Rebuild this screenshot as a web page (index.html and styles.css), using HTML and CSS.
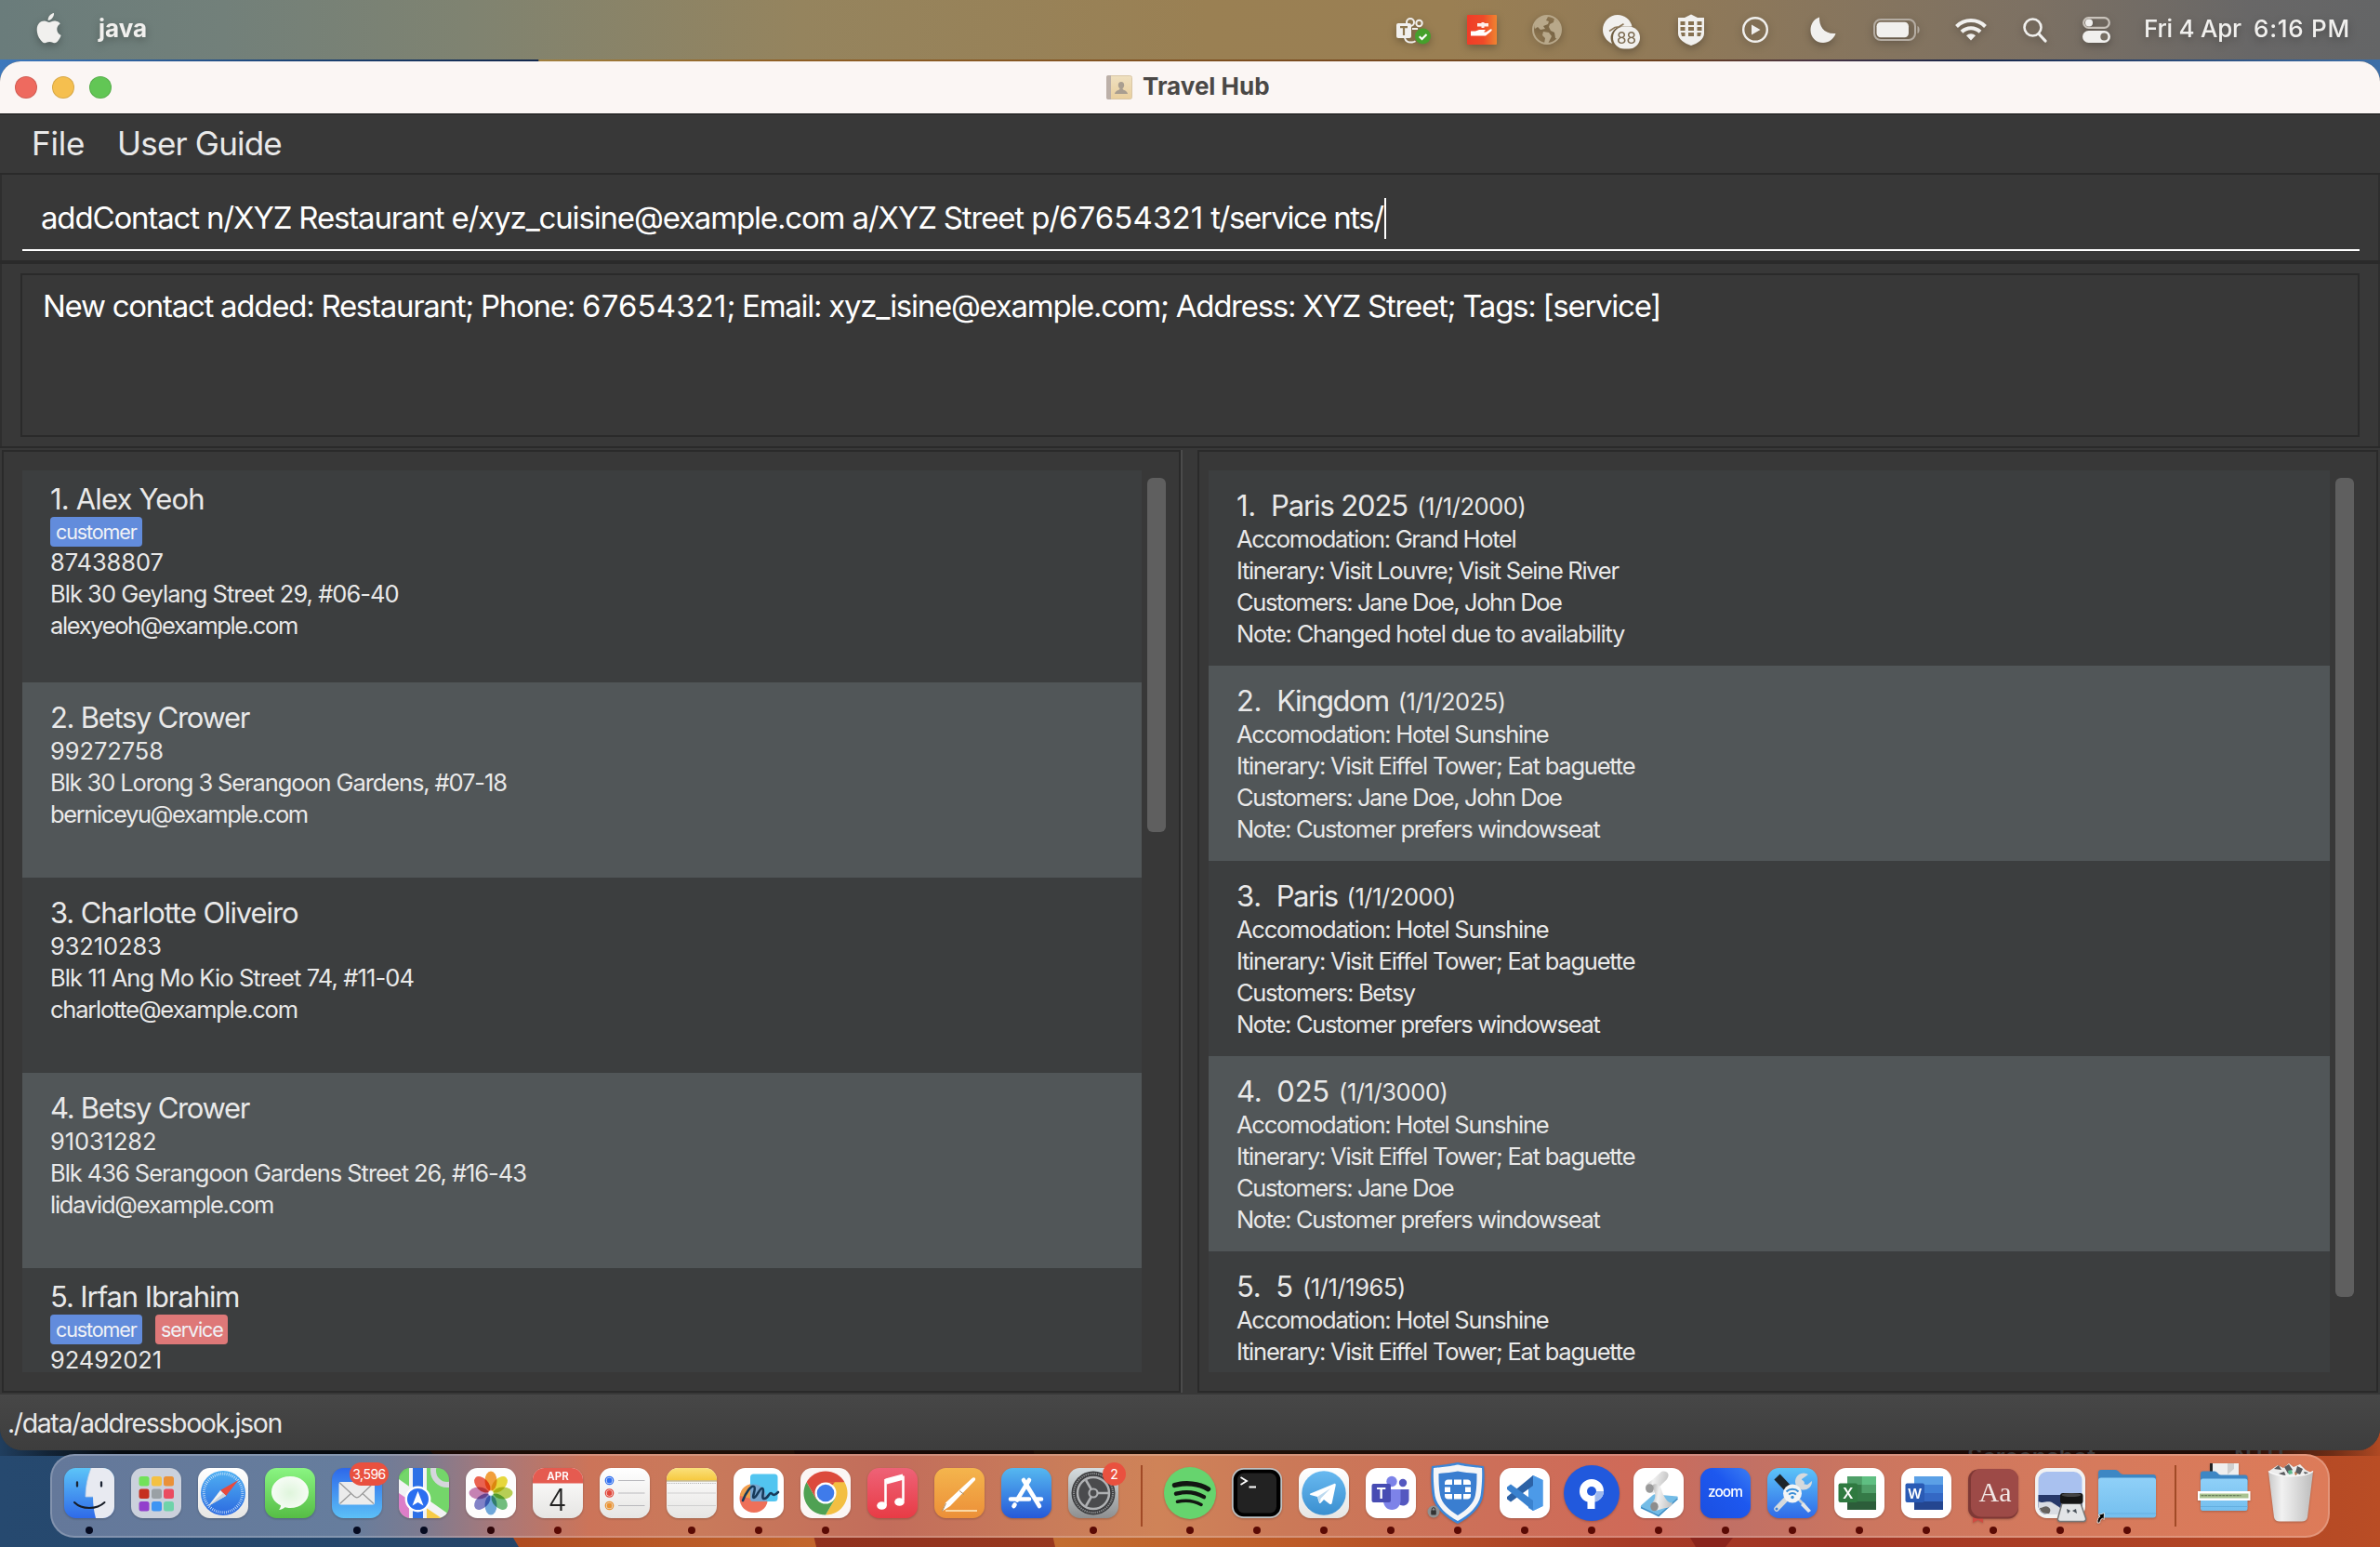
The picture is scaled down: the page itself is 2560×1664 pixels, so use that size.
FILE: index.html
```
<!DOCTYPE html>
<html lang="en">
<head>
<meta charset="utf-8">
<title>Travel Hub</title>
<link rel="stylesheet" href="styles.css">
</head>
<body>
<svg class="wallpaper" width="2560" height="1664" viewBox="0 0 2560 1664" aria-hidden="true">
  <defs>
    <linearGradient id="wTop"><stop offset="0" stop-color="#3d78bd"/><stop offset=".12" stop-color="#1d4577"/><stop offset=".226" stop-color="#13284c"/><stop offset=".2265" stop-color="#a1803e"/><stop offset=".33" stop-color="#8f5f24"/><stop offset=".7" stop-color="#6b3f1d"/><stop offset=".76" stop-color="#4b3542"/><stop offset=".83" stop-color="#17264a"/><stop offset="1" stop-color="#3d6fa8"/></linearGradient>
    <linearGradient id="wBlue"><stop offset="0" stop-color="#26496f"/><stop offset="1" stop-color="#244468"/></linearGradient>
    <linearGradient id="wOr1"><stop offset="0" stop-color="#a8431d"/><stop offset="1" stop-color="#c4682e"/></linearGradient>
    <linearGradient id="wOr2"><stop offset="0" stop-color="#8f2f1d"/><stop offset="1" stop-color="#98381f"/></linearGradient>
    <linearGradient id="wOr3"><stop offset="0" stop-color="#c36f31"/><stop offset=".2" stop-color="#bd5b28"/><stop offset=".45" stop-color="#a63a26"/><stop offset=".6" stop-color="#a13424"/><stop offset="1" stop-color="#b94d25"/></linearGradient>
    <linearGradient id="wShade"><stop offset="0" stop-opacity=".15"/><stop offset=".02" stop-opacity=".5"/><stop offset=".05" stop-opacity=".85"/><stop offset=".94" stop-opacity=".82"/><stop offset=".98" stop-opacity=".4"/><stop offset="1" stop-opacity=".05"/></linearGradient>
  </defs>
  <rect width="2560" height="120" fill="url(#wTop)"/>
  <rect y="1500" width="600" height="164" fill="url(#wBlue)"/>
  <path d="M462 1560L552 1654l6 10H900V1500H462z" fill="url(#wOr1)"/>
  <path d="M840 1500l38 164h262l-40-164z" fill="url(#wOr2)"/>
  <path d="M1098 1500l37 164h1425V1500z" fill="url(#wOr3)"/>
  <path d="M1818 1654l6 10h32l8-10z" fill="#8a241c"/>
  <path d="M0 1530h2560v36H0z" fill="url(#wShade)"/>
</svg>
<div class="desktop-label shot">Screenshot</div>
<div class="desktop-label ntu">NTU</div>

<header class="menubar">
  <svg class="apple" width="27" height="33" viewBox="0 0 27 33"><path fill="currentColor" d="M19 0c.3 2-.6 4-1.800 5.500C16 7 14.300 8 12.700 7.900c-.3-1.900.6-3.900 1.700-5.200C15.600 1.300 17.500.2 19 0zM25.800 11.400c-.2.1-3.500 2-3.500 6.100 0 4.700 4.200 6.400 4.300 6.400 0 .1-.7 2.300-2.200 4.500-1.400 2-2.800 3.900-4.900 3.900s-2.700-1.200-5.200-1.200-3.200 1.200-5.200 1.200-3.400-1.800-5-4C2.200 25.700.7 21.700.7 17.900c0-6.200 4-9.400 8-9.400 2.100 0 3.900 1.400 5.200 1.400s3.200-1.500 5.600-1.500c.9 0 4.200.1 6.300 3z"/></svg>
  <span class="app-name">java</span>
  <div class="status">
    <svg class="s-teams" width="38" height="32" viewBox="0 0 38 32"><g fill="none" stroke="currentColor" stroke-width="2"><circle cx="15" cy="7" r="4"/><circle cx="24.500" cy="8" r="3.200"/><path d="M17 14h6M9 24c1 3 4 5 8 4.500 1.500-.2 2.500-.5 3.500-1.200"/></g><rect y="8" width="16" height="16" rx="2" fill="currentColor"/><path d="M4 12.200h8M8 12.200V21" stroke="#8d774f" stroke-width="2.200"/><circle cx="28.500" cy="22" r="8.500" fill="#45a02c"/><path d="M24.700 22.300l2.800 2.700 5-5" fill="none" stroke="#fff" stroke-width="2.200"/></svg>
    <svg class="s-red" width="32" height="32" viewBox="0 0 32 32"><defs><linearGradient id="rd"><stop offset="0" stop-color="#f03c28"/><stop offset=".55" stop-color="#ef4a28"/><stop offset="1" stop-color="#ef8431"/></linearGradient></defs><rect width="32" height="32" rx="1" fill="url(#rd)"/><path d="M4 17.500h5l4-1.500h7l-2 2.500h2.500l4.500-3c1.800-.8 2.300.8 1 2L20 22.500H4z" fill="#fff"/><path d="M11 9h12v3.500H11zM15.500 8h3v6h-3z" fill="#fff" opacity=".9"/></svg>
    <svg class="s-globe" width="32" height="32" viewBox="0 0 32 32"><circle cx="16" cy="16" r="15" fill="none" stroke="#b8a88a" stroke-width="2"/><path fill="#b8a88a" d="M3 8L10 2h7l-2 4 3 1-1 3-5 2 2 3-5 1-3-3-3 2c-1-3-1-5 0-7zM12 18l6 1 3 4-2 4-2 4h-4l1-6-3-3zM19 10l4-2 1-4 6 6 1 9-3 7-3-1-1-6-4-2-2-4z"/></svg>
    <svg class="s-cloud" width="42" height="38" viewBox="0 0 42 38"><path fill="currentColor" d="M16 0a16 16 0 0 1 15.500 12.500H18A13 13 0 0 0 10 31C4 28 0 22.500 0 16A16 16 0 0 1 16 0z"/><path d="M7 17.500l6-4 4.500-.8 5-3" stroke="#8d785a" stroke-width="1.600" fill="none"/><rect x="11" y="12.500" width="29" height="24" rx="12" fill="currentColor"/><text x="25.500" y="31" text-anchor="middle" font-size="17" fill="#7b6a50">88</text></svg>
    <svg class="s-shield" width="30" height="36" viewBox="0 0 30 36"><path fill="currentColor" d="M1 5h7l7-3.500L22 5h7v17c0 6-7 11-14 13C8 33 1 28 1 22z"/><g fill="#857050"><path d="M3.500 9h5v4h-5zM12 9h6v4h-6zM21.500 9h5v4h-5zM3.500 15h5v4h-5zM12 15h6v4h-6zM21.500 15h5v4h-5zM4 21h4.500v4H5zM12 21h6v4h-6zM21.500 21H26l-1 4h-3.500z"/></g></svg>
    <svg class="s-play" width="30" height="30" viewBox="0 0 30 30"><circle cx="15" cy="15" r="12.800" fill="none" stroke="currentColor" stroke-width="2.400"/><path d="M11 9.500v11l9.500-5.500z" fill="currentColor"/></svg>
    <svg class="s-moon" width="28" height="28" viewBox="0 0 28 28"><path fill="currentColor" d="M10 .5C9.500 10 15 19 27.500 18 25.500 24 20 28 14 28 6 28 .5 22 .5 14.500.5 8 4 2.500 10 .5z"/></svg>
    <svg class="s-batt" width="51" height="24" viewBox="0 0 51 24"><rect x="1" y="1" width="44" height="22" rx="7" fill="none" stroke="#b5ada3" stroke-width="2"/><rect x="3.500" y="3.700" width="34.500" height="16.600" rx="4.500" fill="currentColor"/><path d="M47.500 8c2.800 1 2.800 7 0 8z" fill="#b5ada3"/></svg>
    <svg class="s-wifi" width="34" height="25" viewBox="0 0 34 25"><g fill="none" stroke="currentColor" stroke-width="4"><path d="M1.500 9.500a22 22 0 0 1 31 0"/><path d="M7 15.300a14.300 14.300 0 0 1 20 0"/></g><path d="M17 24.500l-5-5.300a7.200 7.200 0 0 1 10 0z" fill="currentColor"/></svg>
    <svg class="s-search" width="26" height="27" viewBox="0 0 26 27"><circle cx="10.500" cy="10.500" r="9" fill="none" stroke="currentColor" stroke-width="2.600"/><path d="M17 17.500l7 7.500" stroke="currentColor" stroke-width="3.200" stroke-linecap="round"/></svg>
    <svg class="s-cc" width="30" height="28" viewBox="0 0 30 28"><rect x="1.200" y="1.200" width="27.600" height="10.600" rx="5.300" fill="none" stroke="#c9c3bb" stroke-width="2.200"/><circle cx="7" cy="6.500" r="4" fill="currentColor"/><rect y="15" width="30" height="13" rx="6.500" fill="currentColor"/><circle cx="23.300" cy="21.500" r="4" fill="#776f64"/></svg>
    <span class="date">Fri 4 Apr</span><span class="time">6:16 PM</span>
  </div>
</header>

<main class="window">
  <div class="titlebar">
    <div class="lights"><i class="red"></i><i class="yellow"></i><i class="green"></i></div>
    <div class="title">
      <svg width="28" height="27" viewBox="0 0 28 27"><defs><linearGradient id="bk" x2="0" y2="1"><stop offset="0" stop-color="#efe0c0"/><stop offset="1" stop-color="#e9cf9d"/></linearGradient></defs><rect x=".5" y=".5" width="27" height="25" rx="2" fill="url(#bk)" stroke="#d9c6a5"/><path d="M0 2a2 2 0 0 1 2-2h3v26H2a2 2 0 0 1-2-2z" fill="#bcb0a8"/><path d="M16 7c2 0 3.200 1.500 3.200 3.500 0 1.600-.8 3-1.700 3.800 0 2 5 1.700 5.500 5.700H9c.5-4 5.500-3.700 5.500-5.700-.9-.8-1.700-2.200-1.700-3.800C12.800 8.500 14 7 16 7z" fill="#a99e90"/></svg>
      <span>Travel Hub</span>
    </div>
  </div>
  <nav class="appmenu"><span class="m-file">File</span><span class="m-guide">User Guide</span></nav>
  <section class="command"><div class="field"><span>addContact n/XYZ Restaurant e/xyz_cuisine@example.com a/XYZ Street p/<span class="figures">67654321</span><span class="tail"> t/service nts/</span></span><i class="caret"></i></div></section>
  <section class="result"><div class="result-box">New contact added: Restaurant; Phone: <span class="figures">67654321</span>; Email: xyz_isine@example.com; Address: XYZ Street; Tags: [service]</div></section>

  <section class="split">
    <div class="panel left">
      <div class="list">
        <article class="person tagged"><h2 class="n-alex">1. Alex Yeoh</h2><div class="tags"><b class="customer">customer</b></div><p class="phone">87438807</p><p class="addr">Blk 30 Geylang Street 29, #06-40</p><p class="mail">alexyeoh@example.com</p></article>
        <article class="person odd"><h2 class="n-betsy">2. Betsy Crower</h2><p class="phone">99272758</p><p class="addr wide">Blk 30 Lorong 3 Serangoon Gardens, #07-18</p><p class="mail">berniceyu@example.com</p></article>
        <article class="person"><h2>3. Charlotte Oliveiro</h2><p class="phone">93210283</p><p class="addr loose">Blk 11 Ang Mo Kio Street 74, #11-04</p><p class="mail loose">charlotte@example.com</p></article>
        <article class="person odd"><h2 class="n-betsy">4. Betsy Crower</h2><p class="phone">91031282</p><p class="addr mid">Blk 436 Serangoon Gardens Street 26, #16-43</p><p class="mail loose">lidavid@example.com</p></article>
        <article class="person tagged last"><h2>5. Irfan Ibrahim</h2><div class="tags"><b class="customer">customer</b><b class="service">service</b></div><p class="phone">92492021</p></article>
      </div>
      <div class="scroll"><i class="thumb short"></i></div>
    </div>
    <div class="divider"></div>
    <div class="panel right">
      <div class="list">
        <article class="trip"><h2><span class="num">1.</span><span>Paris 2025</span><small>(1/1/2000)</small></h2><p>Accomodation: Grand Hotel</p><p>Itinerary: Visit Louvre; Visit Seine River</p><p class="cust">Customers: Jane Doe, John Doe</p><p class="note">Note: Changed hotel due to availability</p></article>
        <article class="trip odd"><h2><span class="num">2.</span><span class="tight">Kingdom</span><small>(1/1/2025)</small></h2><p class="stay">Accomodation: Hotel Sunshine</p><p class="plan">Itinerary: Visit Eiffel Tower; Eat baguette</p><p class="cust">Customers: Jane Doe, John Doe</p><p class="seat">Note: Customer prefers windowseat</p></article>
        <article class="trip"><h2><span class="num">3.</span><span class="tight">Paris</span><small>(1/1/2000)</small></h2><p class="stay">Accomodation: Hotel Sunshine</p><p class="plan">Itinerary: Visit Eiffel Tower; Eat baguette</p><p>Customers: Betsy</p><p class="seat">Note: Customer prefers windowseat</p></article>
        <article class="trip odd"><h2><span class="num">4.</span><span class="digits">025</span><small>(1/1/3000)</small></h2><p class="stay">Accomodation: Hotel Sunshine</p><p class="plan">Itinerary: Visit Eiffel Tower; Eat baguette</p><p class="cust">Customers: Jane Doe</p><p class="seat">Note: Customer prefers windowseat</p></article>
        <article class="trip"><h2><span class="num">5.</span><span class="digits">5</span><small>(1/1/1965)</small></h2><p class="stay">Accomodation: Hotel Sunshine</p><p class="plan">Itinerary: Visit Eiffel Tower; Eat baguette</p></article>
      </div>
      <div class="scroll"><i class="thumb tall"></i></div>
    </div>
  </section>
  <footer class="statusbar">./data/addressbook.json</footer>
</main>

<svg width="0" height="0" class="defs" aria-hidden="true"><defs>
  <clipPath id="sq"><rect width="54" height="54" rx="12.500"/></clipPath>
  <linearGradient id="gBlueUp" x2="0" y2="1"><stop offset="0" stop-color="#5cc4f8"/><stop offset="1" stop-color="#2f6ae8"/></linearGradient>
  <linearGradient id="gBlueDn" x2="0" y2="1"><stop offset="0" stop-color="#2d68ea"/><stop offset="1" stop-color="#5cc0f7"/></linearGradient>
  <linearGradient id="gGreen" x2="0" y2="1"><stop offset="0" stop-color="#8af582"/><stop offset="1" stop-color="#56bd45"/></linearGradient>
  <linearGradient id="gWhite" x2="0" y2="1"><stop offset="0" stop-color="#fff"/><stop offset="1" stop-color="#e6e5e3"/></linearGradient>
  <linearGradient id="gMusic" x2="0" y2="1"><stop offset="0" stop-color="#ee6277"/><stop offset="1" stop-color="#e83b45"/></linearGradient>
  <linearGradient id="gPages" x2="0" y2="1"><stop offset="0" stop-color="#f4b54d"/><stop offset="1" stop-color="#ec8f38"/></linearGradient>
  <linearGradient id="gStore" x2="0" y2="1"><stop offset="0" stop-color="#55b8f0"/><stop offset="1" stop-color="#2659d8"/></linearGradient>
  <linearGradient id="gGrey" x2="0" y2="1"><stop offset="0" stop-color="#d5dde0"/><stop offset="1" stop-color="#8e8f90"/></linearGradient>
  <linearGradient id="gYel" x2="0" y2="1"><stop offset="0" stop-color="#fae07b"/><stop offset="1" stop-color="#f6c93f"/></linearGradient>
  <linearGradient id="gDial" x2="0" y2="1"><stop offset="0" stop-color="#4fb0f2"/><stop offset="1" stop-color="#2c6ae0"/></linearGradient>
  <linearGradient id="gTele" x2="0" y2="1"><stop offset="0" stop-color="#68b9f0"/><stop offset="1" stop-color="#3a8fd0"/></linearGradient>
  <linearGradient id="gFold" x2="0" y2="1"><stop offset="0" stop-color="#8fd0f8"/><stop offset="1" stop-color="#74bfee"/></linearGradient>
  <linearGradient id="gBin"><stop offset="0" stop-color="#c9c9c9"/><stop offset=".3" stop-color="#f1f1f1"/><stop offset=".6" stop-color="#dcdcdc"/><stop offset="1" stop-color="#bdbdbd"/></linearGradient>
  <radialGradient id="gBub"><stop offset="0" stop-color="#dff5dc"/><stop offset="1" stop-color="#f6fcf5"/></radialGradient>
  <linearGradient id="gZoom" x1="1" x2="0" y2="1"><stop offset="0" stop-color="#3a7df3"/><stop offset=".4" stop-color="#1d58ef"/><stop offset="1" stop-color="#1b4fe0"/></linearGradient>
  <linearGradient id="gPaper" x2="1" y2=".2"><stop offset="0" stop-color="#a9a9a9"/><stop offset=".4" stop-color="#f1f1f1"/><stop offset="1" stop-color="#c6c6c6"/></linearGradient>
</defs></svg>

<footer class="dock">
  <div class="slot run"><svg viewBox="0 0 54 54"><g clip-path="url(#sq)"><rect width="54" height="54" fill="url(#gBlueUp)"/><path d="M29 0C25 10 23 21 23 31h8c0 8 1 16 3 23h20V0z" fill="#e8eaf1"/></g><path d="M29 0C25 10 23 21 23 31h8" fill="none" stroke="#b9cbe6" stroke-width=".8"/><path d="M14 15.500v4M40 15.500v4" stroke="#1c2433" stroke-width="2.300" stroke-linecap="round"/><path d="M11 37c8 8 24 8 32.500 0" fill="none" stroke="#161c26" stroke-width="2" stroke-linecap="round"/></svg></div>
  <div class="slot"><svg viewBox="0 0 54 54"><rect width="54" height="54" rx="12.500" fill="#cbd1dc"/><rect x="8.500" y="9" width="11" height="10.500" rx="2.500" fill="#72e25a"/><rect x="22" y="9" width="11" height="10.500" rx="2.500" fill="#f4c142"/><rect x="35" y="9" width="11" height="10.500" rx="2.500" fill="#ea9138"/><rect x="8.500" y="22.500" width="11" height="10.500" rx="2.500" fill="#c5301f"/><rect x="22" y="22.500" width="11" height="10.500" rx="2.500" fill="#9aa0a5"/><rect x="35" y="22.500" width="11" height="10.500" rx="2.500" fill="#ea4c61"/><rect x="8.500" y="36" width="11" height="10.500" rx="2.500" fill="#9240cc"/><rect x="22" y="36" width="11" height="10.500" rx="2.500" fill="#3d95f3"/><rect x="35" y="36" width="11" height="10.500" rx="2.500" fill="#6fd3aa"/></svg></div>
  <div class="slot"><svg viewBox="0 0 54 54"><rect width="54" height="54" rx="12.500" fill="url(#gWhite)"/><circle cx="27" cy="27" r="24" fill="url(#gDial)"/><circle cx="27" cy="27" r="20.800" fill="none" stroke="#dcecfb" stroke-width="3" stroke-dasharray=".7 1.500"/><path d="M43.500 13L24 24l6 6z" fill="#e8493d"/><path d="M11 41l13-17 6 6z" fill="#f2f2f2"/><path d="M11 41l16-14 3 3z" fill="#ccd3dc"/></svg></div>
  <div class="slot"><svg viewBox="0 0 54 54"><rect width="54" height="54" rx="12.500" fill="url(#gGreen)"/><path d="M27 9c11.500 0 20 7.500 20 17s-8.500 17-20 17c-2 0-4-.3-5.500-.7-1.500 1.500-4 2.500-6.500 2.700 1.200-1.200 2-3 2-4.800C10.500 37 7 32 7 26 7 16.500 15.500 9 27 9z" fill="url(#gBub)"/></svg></div>
  <div class="slot run"><svg viewBox="0 0 54 54"><rect width="54" height="54" rx="12.500" fill="url(#gBlueDn)"/><rect x="7.500" y="15" width="38.500" height="24.500" rx="2" fill="#ececec"/><path d="M8.500 16l15.500 14.500c1.800 1.600 4 1.600 5.800 0L45 16M8.500 38.500l12-11M45 38.500l-12-11" fill="none" stroke="#999" stroke-width="1.200"/></svg><span class="badge long">3,596</span></div>
  <div class="slot run"><svg viewBox="0 0 54 54"><g clip-path="url(#sq)"><rect width="54" height="54" fill="#74d66a"/><path d="M0 12l54 38v4H28L0 30z" fill="#f2f2f4"/><path d="M0 27v27h22V42z" fill="#dc7ec8"/><path d="M28 54V42l18 12z" fill="#f7cb45"/><path d="M0 0h11L0 10z" fill="#6ccf62"/><path d="M11 0h4v54h-4zM26 0h4v54h-4z" fill="#f2f2f4"/><path d="M15 0h11v54H15z" fill="#2d70e6"/><circle cx="52" cy="3" r="15" fill="none" stroke="#d5d6dc" stroke-width="6"/></g><circle cx="20.500" cy="33.500" r="12.700" fill="#2b6ff0" stroke="#fff" stroke-width="2.400"/><path d="M20.500 25l6 15.500-6-3.500-6 3.500z" fill="#fff"/></svg></div>
  <div class="slot run"><svg viewBox="0 0 54 54"><rect width="54" height="54" rx="12.500" fill="#fdfdfd"/><g class="petals"><ellipse cx="27" cy="14" rx="6.500" ry="10.500" fill="#f3a03c"/><ellipse cx="27" cy="14" rx="6.500" ry="10.500" fill="#e8d93c" transform="rotate(45 27 27)"/><ellipse cx="27" cy="14" rx="6.500" ry="10.500" fill="#b8d055" transform="rotate(90 27 27)"/><ellipse cx="27" cy="14" rx="6.500" ry="10.500" fill="#72bf7f" transform="rotate(135 27 27)"/><ellipse cx="27" cy="14" rx="6.500" ry="10.500" fill="#6fa8dc" transform="rotate(180 27 27)"/><ellipse cx="27" cy="14" rx="6.500" ry="10.500" fill="#8283c9" transform="rotate(225 27 27)"/><ellipse cx="27" cy="14" rx="6.500" ry="10.500" fill="#c783b5" transform="rotate(270 27 27)"/><ellipse cx="27" cy="14" rx="6.500" ry="10.500" fill="#ec6350" transform="rotate(315 27 27)"/></g></svg></div>
  <div class="slot run"><svg viewBox="0 0 54 54"><rect width="54" height="54" rx="12.500" fill="url(#gWhite)"/><path d="M0 16.500V12.500A12.500 12.500 0 0 1 12.500 0h29A12.500 12.500 0 0 1 54 12.500v4z" fill="#e55b50"/><text x="27" y="13" text-anchor="middle" font-size="11.500" font-weight="600" fill="#fff">APR</text><text x="26.500" y="45.500" text-anchor="middle" font-size="32" font-weight="300" fill="#222">4</text></svg></div>
  <div class="slot"><svg viewBox="0 0 54 54"><rect width="54" height="54" rx="12.500" fill="url(#gWhite)"/><g fill="none" stroke-width="1.300"><circle cx="10.500" cy="13.500" r="4.200" stroke="#2f6ff0"/><circle cx="10.500" cy="27" r="4.200" stroke="#e2483c"/><circle cx="10.500" cy="40.500" r="4.200" stroke="#ea9333"/></g><circle cx="10.500" cy="13.500" r="2.900" fill="#2f6ff0"/><circle cx="10.500" cy="27" r="2.900" fill="#e2483c"/><circle cx="10.500" cy="40.500" r="2.900" fill="#ea9333"/><path d="M20 13.500h28.500M20 27h28.500M20 40.500h28.500" stroke="#b9b9bd" stroke-width="1.200"/></svg></div>
  <div class="slot run"><svg viewBox="0 0 54 54"><rect width="54" height="54" rx="12.500" fill="url(#gWhite)"/><path d="M0 13.500V12.500A12.500 12.500 0 0 1 12.500 0h29A12.500 12.500 0 0 1 54 12.500v1z" fill="url(#gYel)"/><path d="M0 14h54" stroke="#a99b6c" stroke-width="1"/><path d="M1 16.500h52" stroke="#aaa" stroke-width="1" stroke-dasharray="1 1.200"/><path d="M1 27h52M1 40.500h52" stroke="#cfcfcf" stroke-width="1"/></svg></div>
  <div class="slot run"><svg viewBox="0 0 54 54"><rect width="54" height="54" rx="12.500" fill="#fff"/><path d="M22 17c9 0 15 7 15 15.500S31 48 22 48 6.500 41 6.500 32.500 13 17 22 17z" fill="#ee7059"/><path d="M7 30c1-8 7-13 15-13 3 0 5 1 7 2l-10 14z" fill="#f2a04c"/><rect x="18" y="6.500" width="29.500" height="29.500" rx="3.500" fill="#52c5f0"/><path d="M18 18c8-2 17 2 18 18H21.500a3.500 3.500 0 0 1-3.500-3.500z" fill="#78a6cf"/><path d="M10 35c3-8 9-17 12-15s-3 12 0 12 6-11 9-10-2 11 2 11 5-6 7-6 2 5 8-1" fill="none" stroke="#173a5a" stroke-width="2.600" stroke-linecap="round"/></svg></div>
  <div class="slot run"><svg viewBox="0 0 54 54"><rect width="54" height="54" rx="12.500" fill="#fbf6f4"/><path d="M27 27L6.600 15.200A23.600 23.600 0 0 1 47.400 15.200z" fill="#dc4b3c"/><path d="M27 15.200h20.400A23.600 23.600 0 0 1 27 50.600L37.200 33z" fill="#f3bf42"/><path d="M16.800 33L6.600 15.200A23.600 23.600 0 0 0 27 50.600L37.200 33z" fill="#4fa153"/><path d="M6.600 15.200L16.800 33 27 27l10-11.800z" fill="#dc4b3c"/><circle cx="27" cy="27" r="11.500" fill="#fff"/><circle cx="27" cy="27" r="9.300" fill="#3f7bea"/></svg></div>
  <div class="slot"><svg viewBox="0 0 54 54"><rect width="54" height="54" rx="12.500" fill="url(#gMusic)"/><path d="M20 14.500l18.500-5" stroke="#fff" stroke-width="6"/><path d="M19.500 12v28M38.500 8.500V35" stroke="#fff" stroke-width="2.600"/><ellipse cx="15.500" cy="40.500" rx="5.300" ry="4.300" fill="#fff"/><ellipse cx="34.500" cy="36.500" rx="5.300" ry="4.300" fill="#fff"/></svg></div>
  <div class="slot"><svg viewBox="0 0 54 54"><rect width="54" height="54" rx="12.500" fill="url(#gPages)"/><path d="M12 46h34" stroke="#fbd9a6" stroke-width="2"/><path d="M8.500 46.500l3.500-9L40 11.500c2-2 5-1.500 4 1.500L17 41z" fill="#fff"/><path d="M27 24.500l5 4M8.500 46.500l4-8.500" stroke="#a58c6b" stroke-width="1"/></svg></div>
  <div class="slot"><svg viewBox="0 0 54 54"><rect width="54" height="54" rx="12.500" fill="url(#gStore)"/><g stroke="#fff" stroke-width="4.600" stroke-linecap="round"><path d="M30 13L17 34.500M14.500 39.500l-1 1.500M24 13l17 28M10 33.500h20M37 33.500h6"/></g></svg></div>
  <div class="slot run"><svg viewBox="0 0 54 54"><rect width="54" height="54" rx="12.500" fill="url(#gGrey)"/><circle cx="27" cy="27" r="23.500" fill="#3c3d3f"/><circle cx="27" cy="27" r="21" fill="none" stroke="#8c8e90" stroke-width="2" stroke-dasharray="1.300 1"/><circle cx="27" cy="27" r="17" fill="#4a4b4d" stroke="#b0b2b4" stroke-width="2.500"/><circle cx="27" cy="27" r="4.500" fill="none" stroke="#aeb0b2" stroke-width="2.200"/><path d="M31.500 27H43M24.800 23L19 13M24.800 31L19 41" stroke="#aeb0b2" stroke-width="2.600"/></svg><span class="badge">2</span></div>
  <div class="sep"></div>
  <div class="slot run"><svg viewBox="0 0 54 54"><circle cx="27" cy="27" r="28" fill="#66d46e"/><g fill="none" stroke="#121612" stroke-linecap="round"><path d="M10.500 18.500c12-3.200 26-2 36 4.200" stroke-width="5.400"/><path d="M12 27.700c10-2.700 21.500-1.400 30 3.500" stroke-width="4.300"/><path d="M13.500 36.300c8.500-2 18-1 25.500 3.200" stroke-width="3.500"/></g></svg></div>
  <div class="slot run"><svg viewBox="0 0 54 54"><rect x=".8" y=".8" width="52.400" height="52.400" rx="12" fill="#000" stroke="#bfc4c6" stroke-width="1.800"/><rect x="6" y="5.500" width="42" height="43" rx="7" fill="#222"/><path d="M9.500 10l6.500 4-6.500 4M18.500 20.500H26" fill="none" stroke="#fff" stroke-width="1.800"/></svg></div>
  <div class="slot run"><svg viewBox="0 0 54 54"><rect width="54" height="54" rx="12.500" fill="url(#gWhite)"/><circle cx="27" cy="27" r="23.700" fill="url(#gTele)"/><path d="M12.500 27.500L38 17c1.400-.5 2 .3 1.700 1.700l-4 19c-.4 1.500-1.500 1.700-2.600 1L27 34l-3.500 3.700c-.8.7-1.500.4-1.700-.6l-1.800-6-7.400-2.200c-1-.4-1-1-.1-1.400z" fill="#fff"/><path d="M20 31l14-9-10.500 11-.5 4.500z" fill="#bcd9ef"/></svg></div>
  <div class="slot run"><svg viewBox="0 0 54 54"><rect width="54" height="54" rx="12.500" fill="#fff"/><circle cx="28" cy="14.500" r="5.700" fill="#7d83e8"/><circle cx="40" cy="16" r="4.200" fill="#5458c0"/><path d="M36 23h10.500v11c0 4-3 6.500-6.500 6.500-2 0-3.500-.8-4-1.500z" fill="#5458c0"/><path d="M19 23h18.500v12c0 6-4 10-9.300 10S19 41 19 35z" fill="#7d83e8"/><rect x="6.500" y="17" width="20.500" height="20" rx="2" fill="#474cb3"/><text x="16.700" y="33" text-anchor="middle" font-size="15.500" font-weight="700" fill="#fff">T</text></svg></div>
  <div class="slot run"><svg viewBox="0 0 54 54"><path d="M27-6C18-4-1-2-1-2c-1 8-1 22 1 33C2 43 15 54 27 60c12-6 25-17 27-29 2-11 2-25 1-33 0 0-19-2-28-4z" fill="#3c86d8"/><path d="M27-3.500C18-1.500 1 0 1 0c-.5 8 0 20 1.500 30C4.500 41 15.500 51 27 57c11.500-6 22.500-16 24.500-27C53 20 53.500 8 53 0c0 0-17-1.500-26-3.500z" fill="#f5f6f8"/><path d="M27 3.500C20 5 6.500 6 6.500 6c0 8 0 15 1.500 23C9.500 38 18 45.500 27 51c9-5.500 17.500-13 19-22 1.500-8 1.500-15 1.500-23 0 0-13.500-1-20.500-2.500z" fill="#3a7ed0"/><g fill="#fff"><path d="M13 18v-2c0-2 1.500-3.500 3.500-3.500H21V18zM23 12.500h8V18h-8zM33 12.500h4.500c2 0 3.500 1.500 3.500 3.500v2h-8zM13 20.500h6V26h-6zM35 20.500h6V26h-6zM13 28h8v5.500h-4.500c-2 0-3.500-1.500-3.500-3.500zM23 28h8v5.500h-8zM33 28h8v2c0 2-1.500 3.500-3.500 3.500H33z"/></g><circle cx="1" cy="47" r="6.500" fill="#8f9192"/><rect x="-1.800" y="45.500" width="5.600" height="5" rx="1" fill="#333"/><path d="M-.8 46v-1.500a1.800 1.800 0 0 1 3.600 0V46" fill="none" stroke="#333"/></svg></div>
  <div class="slot run"><svg viewBox="0 0 54 54"><rect width="54" height="54" rx="12.500" fill="#fff"/><path d="M36 8l10.500 5v28L36 46l-5-3V13z" fill="#4c9ae8"/><path d="M36 8v11L12 36.500l-4-3v-2.500z" fill="#2c62a6"/><path d="M8 20.500l4-3L36 35v11L8 23z" fill="#3a82cf"/><path d="M36 8l10.500 5v28L36 46z" fill="#4c9ae8"/></svg></div>
  <div class="slot run"><svg viewBox="0 0 54 54"><circle cx="27" cy="27" r="30" fill="#2159dd"/><path d="M27 12a13 13 0 0 0-13 13c0 5.500 3 9.500 8.500 11.500V44h8v-7.500C36.500 34.500 40 30.500 40 25a13 13 0 0 0-13-13z" fill="#fff"/><circle cx="27" cy="25" r="5" fill="#2159dd"/><path d="M40 25c0 5.500-3.500 9.500-9.500 11.500v-7c1.500-1 2-3 1.500-4.500z" fill="#9db8ee"/></svg></div>
  <div class="slot run"><svg viewBox="0 0 54 54"><rect width="54" height="54" rx="12.500" fill="#fff"/><path d="M8.500 40L21 29c1-.8 2-.8 3-.5l23 2c1 .5 1 1.500.5 2L29 50c-1 1-2 1-3 .5L8.500 43c-1-1-1-2 0-3z" fill="#74bce6"/><path d="M8 42.500L27 51.500 47.500 33" fill="none" stroke="#3d8cc4" stroke-width="1.500"/><path d="M29 5c3-3 8-1 8.500 2 .5 4-3 7-6.500 10L22 27c-5 1-10-2-9-7 1-3 4-5 7-7z" fill="url(#gPaper)"/><path d="M21 18c3-2 8 0 9 5 1 4 3 8 6 12 2 2 4 3 6 2-1 4-4 6-8 6l-10 3c-4 0-6-4-4-8 3-4 4-7 3-11-1-3-2-6-2-9z" fill="url(#gPaper)"/><ellipse cx="17.500" cy="22" rx="4.300" ry="4.800" fill="#9a9a9a"/><ellipse cx="22.500" cy="41.500" rx="4.200" ry="4.800" fill="#8d8d8d"/></svg></div>
  <div class="slot run"><svg viewBox="0 0 54 54"><rect width="54" height="54" rx="12.500" fill="url(#gZoom)"/><text x="27" y="31" text-anchor="middle" font-size="15.500" font-weight="500" textLength="38" fill="#fff">zoom</text></svg></div>
  <div class="slot run"><svg viewBox="0 0 54 54"><rect width="54" height="54" rx="12.500" fill="url(#gBlueUp)"/><path d="M10.500 9.500L25 25" stroke="#1d2429" stroke-width="8.500"/><path d="M30 30l10 10" stroke="#c9d0d5" stroke-width="2.600"/><path d="M39 37l8 9-3 2-8-8z" fill="#e3e6e8"/><path d="M10 44l27-28" stroke="#d5dadd" stroke-width="5.500" stroke-linecap="round"/><path d="M44 7a9 9 0 1 0 4 7l-5 4-5-1-1-5z" fill="#d5dadd"/><circle cx="10" cy="44" r="1.500" fill="#3b7fd6"/><circle cx="27" cy="27.500" r="10" fill="#f3f5f6"/><g fill="none" stroke="#3b8fd6" stroke-width="2"><path d="M20.500 25.500a9.200 9.200 0 0 1 13 0M23.200 28.600a5.400 5.400 0 0 1 7.600 0"/></g><circle cx="27" cy="31.500" r="1.700" fill="#3b8fd6"/></svg></div>
  <div class="slot run"><svg viewBox="0 0 54 54"><rect width="54" height="54" rx="12.500" fill="#fff"/><rect x="14" y="9" width="31" height="36" rx="1.500" fill="#357a47"/><path d="M14 9h15.500v9H14zM29.500 18H45v9H29.500z" fill="#4f9f68"/><path d="M29.500 9H45v9H29.500z" fill="#5fbf82"/><path d="M14 36h31v9H14z" fill="#2c5d3a"/><rect x="4.500" y="16.500" width="20.500" height="20.500" rx="2" fill="#2f7a40"/><text x="14.700" y="32.500" text-anchor="middle" font-size="16" font-weight="600" fill="#fff">X</text></svg></div>
  <div class="slot run"><svg viewBox="0 0 54 54"><rect width="54" height="54" rx="12.500" fill="#fff"/><rect x="14" y="9" width="31" height="36" rx="1.500" fill="#3468c4"/><path d="M14 9h31v9H14z" fill="#5ba0e6"/><path d="M14 18h31v9H14z" fill="#3f7fd6"/><path d="M14 36h31v9H14z" fill="#244690"/><rect x="4.500" y="16.500" width="20.500" height="20.500" rx="2" fill="#2a5bb5"/><text x="14.700" y="32.500" text-anchor="middle" font-size="15" font-weight="600" fill="#fff">W</text></svg></div>
  <div class="slot run"><svg viewBox="0 0 54 54"><path d="M5 52h11v7l-5.500-3L5 59z" fill="#d04b42"/><rect y="1.500" width="54" height="53" rx="11" fill="#7e3835"/><rect x="3" y="1" width="51" height="51.500" rx="11" fill="#9d4a47"/><text x="29" y="36" text-anchor="middle" class="serif" font-size="30" fill="#f1e6e4">Aa</text></svg></div>
  <div class="slot run"><svg viewBox="0 0 54 54"><rect width="54" height="54" rx="12.500" fill="#f2f2f2"/><rect x="3.500" y="4" width="47" height="46" rx="9" fill="#a9c1ef"/><path d="M3.500 29h47v12a9 9 0 0 1-9 9h-29a9 9 0 0 1-9-9z" fill="#26386a"/><path d="M3.500 36c6 3 10-2 16 2s9 4 11 12H12.500a9 9 0 0 1-9-9z" fill="#d9dce2"/><path d="M5 43c4 0 6-3 9-1s3 4 1 7c-6 0-9-1-10-6z" fill="#66625f"/><path d="M29 38h20l5.500 16c.5 2-.5 3.500-2.500 3.500H27c-2 0-3-1.500-2.500-3.500z" fill="#e2e4e6" stroke="#777" stroke-width="1.500"/><path d="M34 44l4 2-3 3zM40 46l4-2 1 5z" fill="#4b535b"/><rect x="27" y="27" width="24.500" height="11.500" rx="3" fill="#151515"/><ellipse cx="39" cy="29" rx="10.500" ry="2" fill="#444"/></svg></div>
  <div class="slot run"><svg viewBox="0 0 54 54"><path d="M-4 5a3 3 0 0 1 3-3h15c4 0 5 5 9 5h32a3 3 0 0 1 3 3v10H-4z" fill="#3d87c4"/><rect x="-4" y="10.500" width="62" height="43" rx="3" fill="url(#gFold)"/><path d="M-4 49h62" stroke="#64afe0"/><path d="M-5 59c0-4 1-6 3-7l-2-1.500 6.500-2-.5 7-1.500-1.500c-2 1-2.500 3-3 5z" fill="#000" stroke="#fff" stroke-width=".8"/></svg></div>
  <div class="sep"></div>
  <div class="slot"><svg viewBox="0 0 54 54"><path d="M12-5h31v20H12z" fill="#efefef"/><path d="M12-5h3v16h-3z" fill="#222"/><path d="M31-5v12l7-6v-6z" fill="#cfcfcf"/><path d="M2 6a2.500 2.500 0 0 1 2.500-2.500H17c3 0 4 4 7 4h26A2.500 2.500 0 0 1 52.500 10v8H2z" fill="#3d87c4"/><rect x="2" y="11.500" width="50.500" height="34.500" rx="2.500" fill="url(#gFold)"/><path d="M2 41.500h50.500" stroke="#64afe0"/><rect x="-1" y="25" width="56.500" height="10" fill="#fff"/><rect x="1" y="27.500" width="52.500" height="5" fill="#a9c391"/><path d="M2.500 29.700h43" stroke="#5d6e50" stroke-width="1" stroke-dasharray="3 .8"/></svg></div>
  <div class="slot"><svg viewBox="0 0 54 54"><path d="M4 3l9-6 6 3 6-5 5 4 7-3 6 6 6 3-4 8H8z" fill="#ececec"/><path d="M9 1l5-4 3 5zM20-1l5-3 4 6-5 4zM34-2l6 3-3 6-5-2zM14 6l6-2 2 5zM41 4l5 1-3 4z" fill="#595b5e"/><path d="M24 3l4-1 1 4-4 1z" fill="#5bb98a"/><path d="M31 4l3 2-2 3z" fill="#bb7443"/><path d="M3 4c8 6 40 6 48 0l-6 49c-.5 3-3 4.500-6 4.500H15c-3 0-5.500-1.500-6-4.500z" fill="url(#gBin)"/><path d="M3 3.500c8 7 40 7 48 0" fill="none" stroke="#fafafa" stroke-width="1.500"/></svg></div>
</footer>
</body>
</html>
```
FILE: styles.css
```
* { box-sizing: border-box; }

body {
  margin: 0;
  width: 2560px;
  height: 1664px;
  overflow: hidden;
  position: relative;
  display: flex;
  flex-direction: column;
  align-items: stretch;
  background: #24446b;
  font-family: Inter, "Liberation Sans", sans-serif;
  color: #e9e9e9;
}

svg { display: block; overflow: visible; flex: none; }
svg text { font-family: Inter, "Liberation Sans", sans-serif; }
svg text.serif { font-family: "Liberation Serif", serif; }
h2, p { margin: 0; font-weight: 400; white-space: nowrap; }
i, b { font-style: normal; font-weight: 400; }

.wallpaper { position: absolute; inset: 0; }
.defs { position: absolute; }
.desktop-label {
  position: absolute;
  top: 1552px;
  font-size: 25px;
  line-height: 30px;
  font-weight: 600;
  color: #3d3b3c;
}
.shot { left: 2116px; }
.ntu { left: 2403px; }

/* system menu bar */
.menubar {
  position: relative;
  height: 64px;
  flex: none;
  display: flex;
  align-items: flex-start;
  padding-left: 39px;
  color: #f1f0ee;
  background: linear-gradient(90deg, #6a7c7b 0, #72807a 240px, #7f8371 500px, #95845e 860px, #9a8053 1300px, #9a7f53 1560px, #8d785a 1860px, #7d7163 2180px, #686767 2420px, #646566 2560px);
}
.menubar svg, .menubar span { filter: drop-shadow(0 3px 4px rgba(0, 0, 0, .28)); }
.apple { margin-top: 14px; }
.app-name { margin-left: 40px; width: 52px; font-size: 26px; font-weight: 700; line-height: 61px; }
.status { flex: 1; display: flex; align-items: flex-start; margin-left: 1344px; }
.s-teams { margin-top: 17px; }
.s-red { margin: 16px 0 0 38px; }
.s-globe { margin: 16px 0 0 38px; }
.s-cloud { margin: 16px 0 0 44px; }
.s-shield { margin: 14px 0 0 38px; }
.s-play { margin: 17px 0 0 39px; }
.s-moon { margin: 18px 0 0 44px; }
.s-batt { margin: 20px 0 0 40px; }
.s-wifi { margin: 19px 0 0 37px; }
.s-search { margin: 19px 0 0 39px; }
.s-cc { margin: 18px 0 0 38px; }
.date, .time { font-size: 26px; font-weight: 500; line-height: 61px; white-space: pre; }
.date { margin-left: 36px; letter-spacing: -.25px; width: 118px; }
.time { letter-spacing: .75px; }

/* application window */
.window {
  position: relative;
  flex: none;
  height: 1494px;
  margin-top: 2px;
  display: flex;
  flex-direction: column;
  background: #383838;
  border-radius: 22px 22px 24px 24px;
  overflow: hidden;
}
.titlebar {
  height: 57px;
  flex: none;
  display: flex;
  align-items: center;
  background: #fbf6f4;
  border-bottom: 1px solid #141414;
}
.lights { display: flex; gap: 16px; padding-left: 16px; width: 1190px; }
.lights i { width: 24px; height: 24px; border-radius: 50%; border: 1px solid rgba(0, 0, 0, .12); }
.red { background: #ee6a5f; }
.yellow { background: #f5bf4f; }
.green { background: #62c655; }
.title { display: flex; align-items: center; gap: 11px; font-size: 26px; font-weight: 700; color: #4a4846; line-height: 56px; }
.title span { position: relative; top: -1px; }

.appmenu {
  height: 65px;
  flex: none;
  display: flex;
  padding-left: 34px;
  font-size: 35px;
  line-height: 62px;
  border-bottom: 2px solid #2a2a2a;
}
.m-file { width: 92px; letter-spacing: -.2px; }
.m-guide { letter-spacing: -.82px; }

.command {
  height: 96px;
  flex: none;
  padding: 0 22px 12px 24px;
  border-bottom: 4px solid #2a2a2a;
  box-shadow: inset 2px 0 #2e2e2e, inset -2px 0 #2e2e2e;
}
.field {
  height: 82px;
  display: flex;
  padding: 25px 0 0 20px;
  border-bottom: 2px solid #fff;
  font-size: 33px;
  line-height: 42px;
  letter-spacing: -1.16px;
  color: #fff;
  white-space: nowrap;
}
.figures { letter-spacing: .12px; }
.tail { letter-spacing: -1.42px; }
.caret { width: 2px; height: 44px; margin-left: 1px; background: #fff; }

.result {
  height: 198px;
  flex: none;
  padding: 10px 22px;
  border-bottom: 2px solid #2a2a2a;
  box-shadow: inset 2px 0 #2e2e2e, inset -2px 0 #2e2e2e;
}
.result-box {
  height: 176px;
  padding: 12px 22px;
  border: 2px solid #2a2a2a;
  font-size: 33px;
  line-height: 42px;
  letter-spacing: -1.27px;
  color: #fff;
  white-space: nowrap;
}

.split {
  height: 1018px;
  flex: none;
  display: flex;
  padding: 2px;
}
.panel { display: flex; border: 2px solid #2a2a2a; height: 1014px; padding-top: 20px; }
.left { width: 1268px; padding-left: 20px; }
.right { width: 1270px; padding-left: 10px; }
.divider { width: 18px; flex: none; border-left: 2px solid #4b4b4b; }
.list { height: 970px; overflow: hidden; background: #3c3e3f; }
.left .list { width: 1204px; }
.right .list { width: 1206px; }
.scroll { padding: 8px 0 0 6px; }
.thumb { display: block; width: 20px; border-radius: 6px; background: #5f5f5f; }
.short { height: 381px; }
.tall { height: 881px; }

.person, .trip { height: 210px; padding: 19px 0 0 30px; background: #3c3e3f; }
.person.tagged { padding-top: 12px; }
.person.tagged:first-child { height: 228px; }
.person.last { height: 112px; }
.person.odd, .trip.odd { background: #515658; }
.list h2 { height: 38px; font-size: 31px; line-height: 38px; letter-spacing: -1.1px; }
.list h2.n-alex { letter-spacing: -.83px; }
.list h2.n-betsy { letter-spacing: -1.3px; }
.list p { font-size: 25.5px; line-height: 34px; letter-spacing: -1.31px; }
.list p.phone { letter-spacing: -.1px; }
.list .last .phone { line-height: 26px; padding-top: 4px; }
.list p.addr { letter-spacing: -.98px; }
.list p.wide { letter-spacing: -1.12px; }
.list p.mid { letter-spacing: -1.05px; }
.list p.addr.loose { letter-spacing: -.9px; }
.list p.mail { letter-spacing: -1.38px; }
.list p.mail.loose { letter-spacing: -1.24px; }
.list p.note { letter-spacing: -1.22px; }
.list p.seat { letter-spacing: -1.34px; }
.list p.stay { letter-spacing: -1.26px; }
.list p.plan { letter-spacing: -1.22px; }
.list p.cust { letter-spacing: -1.4px; }
.tags { display: flex; gap: 14px; height: 32px; }
.tags b { height: 32px; border-radius: 4px; padding: 0 5px 0 6px; font-size: 21.5px; line-height: 32.5px; letter-spacing: -1.1px; color: #f0f2f6; }
.customer { width: 99px; background: #628cdc; }
.service { width: 78px; background: #de7878; }

.trip h2 { display: flex; align-items: flex-start; }
.num { margin-right: 16px; letter-spacing: -.3px; }
.trip h2 .tight { letter-spacing: -1.5px; }
.trip h2 small { margin: 1px 0 0 10px; font-size: 25.5px; letter-spacing: -.43px; line-height: 37px; }
.trip h2 .digits { letter-spacing: -.2px; }

.statusbar {
  flex: 1;
  padding-left: 8px;
  font-size: 28.5px;
  line-height: 61px;
  letter-spacing: -1.39px;
  background: linear-gradient(#474747, #3d3d3d);
  border-bottom: 1px solid #626262;
}

/* dock */
.dock {
  position: relative;
  flex: none;
  width: 2452px;
  height: 90px;
  margin: 4px 0 0 54px;
  padding: 0 4px;
  display: flex;
  border: 2px solid rgba(255, 255, 255, .2);
  border-radius: 26px;
  background: linear-gradient(90deg, #64789a 0, #667d9d 320px, #7d7b90 400px, #a87879 480px, #cc7459 580px, #c97a5b 700px, #c26d5b 900px, #c97c5a 1080px, #cf8358 1190px, #cb7958 1330px, #cd6f59 1550px, #cf6a58 1700px, #c17065 1810px, #cc765f 1960px, #d67a5c 2200px, #dd7b59 2452px) border-box;
}
.slot { position: relative; width: 72px; flex: none; padding: 13px 9px 0; }
.slot svg { width: 54px; height: 54px; filter: drop-shadow(0 1px 1px rgba(0, 0, 0, .22)); }
.run::after {
  content: "";
  position: absolute;
  left: 32px;
  top: 76px;
  width: 8px;
  height: 8px;
  border-radius: 50%;
  background: #5a0a04;
}
.run:nth-child(-n+6)::after { background: #050a20; }
.run:nth-child(7)::after { background: #2e0508; }
.sep { width: 32px; flex: none; padding: 10px 0 0 15px; }
.sep::before { content: ""; display: block; width: 2px; height: 66px; background: #a14a26; }
.badge {
  position: absolute;
  left: 46px;
  top: 7px;
  width: 25px;
  height: 25px;
  border-radius: 13px;
  background: #e9513f;
  color: #fff;
  font-size: 14px;
  line-height: 25px;
  text-align: center;
}
.badge.long { left: 28px; width: 42px; letter-spacing: -.5px; }
.petals ellipse { mix-blend-mode: multiply; }
```
